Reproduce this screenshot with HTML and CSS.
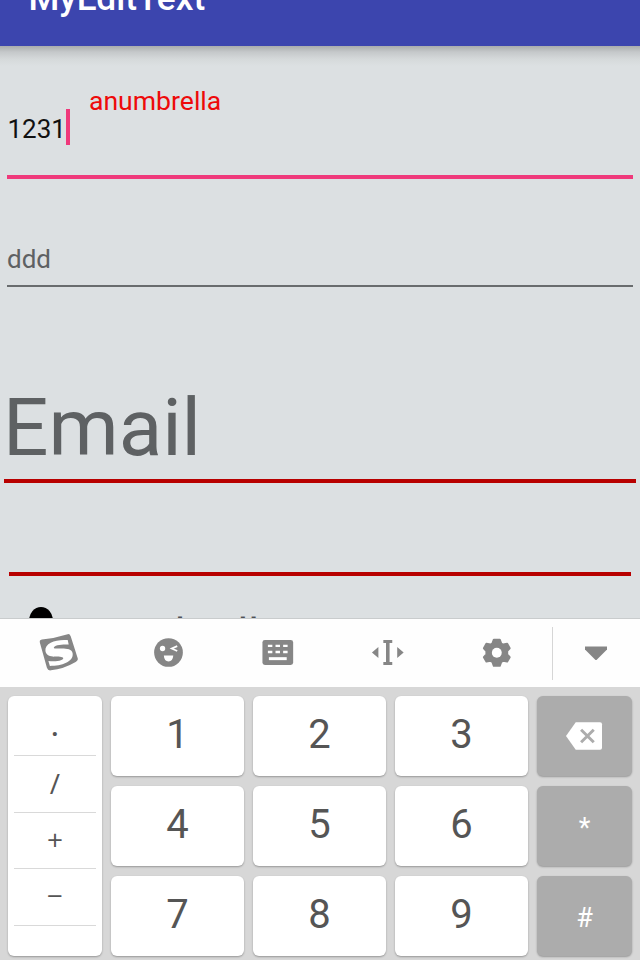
FILE: index.html
```html
<!DOCTYPE html>
<html lang="en">
<head>
<meta charset="utf-8">
<title>MyEditText</title>
<link rel="stylesheet" href="styles.css">
</head>
<body>
<div class="screen">
  <header class="appbar"><h1>MyEditText</h1></header>
  <main class="form">
    <div class="field field-name">
      <span class="value">1231</span><i class="caret"></i><span class="float-label">anumbrella</span>
    </div>
    <div class="field field-ddd">ddd</div>
    <div class="field field-email">Email</div>
    <div class="field field-empty"></div>
    <div class="signature">
      <svg class="avatar" viewBox="0 0 24 30"><ellipse cx="12" cy="14" rx="12" ry="14"/></svg>
      <span>anumbrella</span>
    </div>
  </main>
  <nav class="toolbar">
    <svg viewBox="0 0 44 44">
      <path fill="#868686" d="M5 8.500Q18 7 31 3Q33 2.500 34 5L41 27Q42 29 39 31Q27 38 14 39.500Q11 40 10 37L3 12Q2 9 5 8.500Z"/>
      <path fill="#fff" d="M31 9L32 13.500C26 13 16.500 14 17 17C18 19 35 14.500 36 22.500C37 31 25 35 13 35L11.500 30C21 31 27 29 26.500 27C25 24 10 29 8.500 20C7.500 11.500 20 8 31 9Z"/>
    </svg>
    <svg viewBox="0 0 44 44">
      <circle cx="21.700" cy="21.500" r="14.500" fill="#868686"/>
      <circle cx="15.700" cy="17.500" r="2.700" fill="#fff"/>
      <path fill="none" stroke="#fff" stroke-width="1.8" d="M30.500 15L25 17.500L30.500 20"/>
      <path fill="#fff" d="M17 24.500H26.500Q26 30.500 21.700 30.500T17 24.500Z"/>
    </svg>
    <svg viewBox="0 0 44 44">
      <rect x="6.500" y="9" width="31" height="25" rx="2.500" fill="#868686"/>
      <path fill="none" stroke="#fff" stroke-width="2.300" d="M12 14.700h4.500m3.200 0h4.500m3.200 0h4.500M12 21h4.500m3.200 0h4.500m3.200 0h4.500"/>
      <path fill="#fff" d="M13 26.200h18v3H13z"/>
    </svg>
    <svg viewBox="0 0 44 44" fill="#868686">
      <path d="M17.500 9h9v3h-2.700v19h2.700v3h-9v-3h2.700V12h-2.700zM6 21.500L12.500 16v11zM38 21.500L31.500 16v11z"/>
    </svg>
    <svg viewBox="0 0 44 44">
      <path fill="#868686" stroke="#868686" stroke-width="2" stroke-linejoin="round" d="M19 8.500h6l1.500 4 2 1 4-.8 2.500 4.500-2.500 2.800v3.400l2.500 2.800-2.500 4.500-4-.8-2 1-1.500 4h-6l-1.500-4-2-1-4 .8-2.500-4.500 2.500-2.800v-3.400l-2.500-2.800 2.500-4.500 4 .8 2-1z"/>
      <circle cx="22" cy="21.700" r="5" fill="#fff"/>
    </svg>
    <div class="collapse">
      <svg viewBox="0 0 44 44"><path fill="#868686" d="M11 15.500h22v3L23 28.500Q22 29.500 21 28.500L11 18.500z"/></svg>
    </div>
  </nav>
  <section class="keyboard">
    <div class="symbols"><span class="dot">.</span><span class="slash">/</span><span class="plus">+</span><span class="minus">−</span></div>
    <button>1</button><button>2</button><button>3</button>
    <button class="dark"><svg viewBox="0 0 38 28"><path fill="#fff" d="M10 0H35Q37 0 37 2V26Q37 28 35 28H10L0 14Z"/><path fill="none" stroke="#acacac" stroke-width="3" d="M15.500 7.500l13 13m0-13l-13 13"/></svg></button>
    <button>4</button><button>5</button><button>6</button><button class="dark star">*</button>
    <button>7</button><button>8</button><button>9</button><button class="dark hash">#</button>
  </section>
</div>
</body>
</html>
```
FILE: styles.css
```css
* { box-sizing: border-box; }
body { margin: 0; font-family: Roboto, "Liberation Sans", sans-serif; }
.screen { width: 640px; height: 960px; overflow: hidden; display: flex; flex-direction: column; background: #dce0e2; }

.appbar { height: 46px; flex: none; background: #3c45ae; }
.appbar h1 { margin: -22px 0 0 28.5px; font-size: 35.3px; line-height: 40px; font-weight: 500; color: #fff; }

.form { height: 572px; flex: none; overflow: hidden; color: #5e6163; font-size: 26px; background: linear-gradient(#a9acad, #c5c8ca 6px, #d5d9da 13px, #dce0e2 20px); }
.field { margin: 0 7px; }
.field-name { height: 133px; display: flex; align-items: flex-start; border-bottom: 4px solid #ef397b; padding: 63px 0 0 .5px; color: #111; }
.value { line-height: 40px; }
.caret { width: 4px; height: 36px; background: #ef397b; }
.float-label { margin: -28px 0 0 19px; line-height: 40px; font-size: 26.6px; color: #ee0a0a; }
.field-ddd { height: 108px; padding-top: 60px; line-height: 40px; border-bottom: 2px solid #696c6e; }
.field-email { margin: 0 4px; height: 196px; padding-top: 91px; font-size: 80px; line-height: 100px; text-indent: -1px; border-bottom: 4px solid #b80000; }
.field-empty { margin: 0 9px; height: 93px; border-bottom: 4px solid #b80000; }
.signature { display: flex; padding: 31px 0 0 29px; font-size: 44px; line-height: 60px; color: #4d5056; }
.avatar { width: 24px; height: 30px; }
.signature span { margin: -2px 0 0 11px; }

.toolbar { height: 69px; flex: none; display: flex; align-items: center; background: #fefefe; border-top: 1px solid #c9cccd; padding-left: 4px; }
.toolbar svg { width: 44px; height: 44px; }
.toolbar > svg { margin: 0 33px; flex: none; width: 43.6px; }
.collapse { flex: 1; height: 53px; display: flex; align-items: center; justify-content: center; border-left: 1px solid #d6d6d6; }

.keyboard { height: 273px; flex: none; display: grid; grid-template-columns: 94px 133px 133px 133px 95px; grid-template-rows: repeat(3, 80px); gap: 10px 9px; padding: 9px 8px; background: #d7d7d7; }
.keyboard button, .symbols { border: 0; border-radius: 6px; background: #fff; box-shadow: 0 1px 2px rgba(0, 0, 0, .3); color: #555; font-family: inherit; }
.keyboard button { padding: 0 0 3px; font-size: 40px; display: flex; align-items: center; justify-content: center; }
.keyboard .dark { background: #acacac; color: #fff; font-size: 27px; padding: 0; }
.keyboard .star { padding-top: 4px; }
.keyboard .hash { padding-top: 4px; }
.dark svg { width: 37px; height: 28px; }
.symbols { grid-row: 1 / 4; display: flex; flex-direction: column; padding: 4px 6px 0; font-size: 26px; }
.symbols span { height: 56.4px; line-height: 56px; text-align: center; border-bottom: 1px solid #d9d9d9; }
.symbols .dot { font-size: 36px; line-height: 49px; }
.symbols .slash { font-family: "Open Sans", sans-serif; font-size: 28px; line-height: 54px; }
.symbols .plus, .symbols .minus { font-family: "Open Sans", sans-serif; font-size: 28px; line-height: 53px; }
```
